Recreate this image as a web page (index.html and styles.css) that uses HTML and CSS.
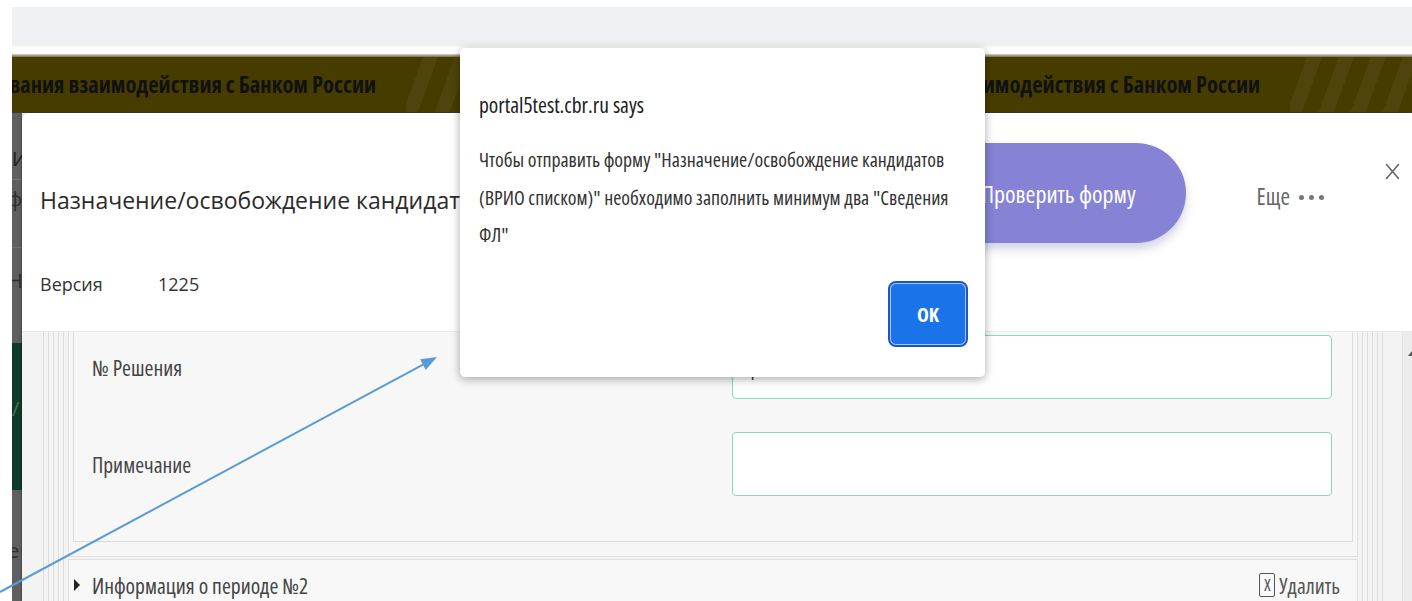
FILE: index.html
```html
<!DOCTYPE html>
<html lang="ru">
<head>
<meta charset="utf-8">
<title>Назначение/освобождение кандидатов</title>
<link rel="stylesheet" href="styles.css">
</head>
<body>
<div class="page">
  <div class="topbar"></div>
  <div class="topbar-fade"></div>

  <div class="banner">
    <div class="marquee">
      <div class="marquee-item">
        <span class="marquee-text">Портал для обеспечения и документирования взаимодействия с Банком России</span>
        <span class="marquee-stripes"></span>
      </div>
      <div class="marquee-item">
        <span class="marquee-text">Портал для обеспечения и документирования взаимодействия с Банком России</span>
        <span class="marquee-stripes"></span>
      </div>
    </div>
  </div>

  <div class="workspace">
    <div class="backdrop-strip">
      <div class="strip-part strip-top">
        <span class="strip-char strip-char-first">И</span>
        <span class="strip-char">ф</span>
        <span class="strip-char strip-char-low">Н</span>
      </div>
      <div class="strip-part strip-green"><span class="strip-char strip-char-light">/</span></div>
      <div class="strip-part strip-bottom"><span class="strip-char">е</span></div>
    </div>

    <section class="modal">
      <header class="modal-head">
        <div class="title-row">
          <h1 class="modal-title">Назначение/освобождение кандидатов (ВРИО списком)</h1>
          <button class="btn-check" type="button">Проверить форму</button>
          <button class="btn-more" type="button">Еще <span class="dots"><i></i><i></i><i></i></span></button>
          <button class="btn-close" type="button" aria-label="Закрыть">
            <svg width="15" height="17" viewBox="0 0 15 17"><path d="M1.5 1.5 L13.5 15.5 M13.5 1.5 L1.5 15.5" stroke="#666" stroke-width="1.6" fill="none" stroke-linecap="round"/></svg>
          </button>
        </div>
        <div class="version-row">
          <span class="version-label">Версия</span>
          <span class="version-value">1225</span>
        </div>
      </header>

      <div class="modal-body">
        <div class="scroll-area">
          <div class="nest"><div class="nest"><div class="nest"><div class="nest"><div class="nest">
            <div class="period">
              <div class="fieldset">
                <div class="form-row">
                  <span class="field-label">№ Решения</span>
                  <input class="field-input field-input-filled" type="text" value="1">
                </div>
                <div class="form-row">
                  <span class="field-label">Примечание</span>
                  <input class="field-input" type="text" value="">
                </div>
              </div>
            </div>
            <div class="period period-collapsed">
              <div class="period-head">
                <span class="caret"></span>
                <span class="period-title">Информация о периоде №2</span>
                <button class="btn-remove" type="button"><span class="remove-box">X</span>Удалить</button>
              </div>
            </div>
          </div></div></div></div></div>
        </div>
        <div class="scrollbar"><span class="scroll-up"></span></div>
      </div>
    </section>
  </div>

  <div class="alert" role="alertdialog">
    <div class="alert-title">portal5test.cbr.ru says</div>
    <div class="alert-text">Чтобы отправить форму "Назначение/освобождение кандидатов (ВРИО списком)" необходимо заполнить минимум два "Сведения ФЛ"</div>
    <div class="alert-actions"><button class="alert-ok" type="button">OK</button></div>
  </div>

  <svg class="pointer" width="1412" height="601" viewBox="0 0 1412 601">
    <line x1="0" y1="592" x2="423" y2="364.6" stroke="#5b9bd5" stroke-width="2"/>
    <polygon points="437,357 425.7,369.9 420.1,359.3" fill="#5b9bd5"/>
  </svg>
</div>
</body>
</html>
```
FILE: styles.css
```css
* { box-sizing: border-box; }

html, body {
  margin: 0;
  padding: 0;
}

body {
  background: #fff;
  font-family: "Open Sans", "Noto Sans", "DejaVu Sans", sans-serif;
  color: #333;
}

.page {
  position: relative;
  width: 1412px;
  height: 601px;
  overflow: hidden;
  padding: 7px 0 0 12px;
  display: flex;
  flex-direction: column;
}

/* top application bar */
.topbar {
  flex: none;
  height: 38px;
  background: #eff0f2;
}

.topbar-fade {
  flex: none;
  height: 12px;
  background: linear-gradient(#f3f2ea 0, #fff 25%, #fff 70%, #aaa58f 85%, #7a7350 100%);
}

/* olive running banner */
.banner {
  flex: none;
  height: 56px;
  background: #473c00;
  border-bottom: 1px solid #3d3a30;
  overflow: hidden;
  display: flex;
}

.marquee {
  flex: none;
  display: flex;
  margin-left: -360px;
}

.marquee-item {
  flex: none;
  width: 884px;
  display: flex;
  align-items: center;
  justify-content: flex-end;
}

.marquee-text {
  white-space: nowrap;
  font-weight: 700;
  font-size: 22.5px;
  font-stretch: 75%;
  color: #111;
}

.marquee-stripes {
  flex: none;
  width: 130px;
  margin-left: 30px;
  align-self: stretch;
  background: repeating-linear-gradient(110deg, transparent 0 16px, rgba(255, 255, 255, 0.045) 16px 30px);
}

/* page area behind the modal */
.workspace {
  flex: 1;
  min-height: 0;
  display: flex;
}

.backdrop-strip {
  flex: none;
  width: 10px;
  overflow: hidden;
  display: flex;
  flex-direction: column;
  background: #5f5f5f;
}

.strip-part {
  display: flex;
  flex-direction: column;
  overflow: hidden;
}

.strip-top {
  height: 230px;
  padding-top: 35px;
  background: linear-gradient(#5f5f5f 0 66px, #767676 66px 67px, #5f5f5f 67px 134px, #737373 134px 135px, #5f5f5f 135px);
}

.strip-green {
  height: 147px;
  padding-top: 55px;
  background: #0e3a2a;
}

.strip-bottom {
  flex: 1;
  padding-top: 50px;
}

.strip-char {
  font-size: 20px;
  line-height: 22px;
  color: #2e2e2e;
  margin-left: -4px;
}

.strip-char-first { color: #1e1e1e; margin-left: 0; margin-bottom: 18px; }
.strip-char-low { margin-top: 60px; }
.strip-char-light { color: #4f6f62; margin-left: 0; }

/* modal window */
.modal {
  flex: 1;
  min-width: 0;
  display: flex;
  flex-direction: column;
  background: #fff;
  border-radius: 6px 0 0 0;
  box-shadow: -1px 0 2px rgba(0, 0, 0, 0.25);
  overflow: hidden;
}

.modal-head {
  flex: none;
  height: 219px;
  padding: 30px 12px 0 18px;
  border-bottom: 1px solid #ebebeb;
}

.title-row {
  display: flex;
  align-items: center;
  height: 100px;
}

.modal-title {
  flex: 1;
  min-width: 0;
  margin: 0;
  padding-top: 14px;
  font-size: 23px;
  font-weight: 400;
  color: #2b2b2b;
  white-space: nowrap;
  overflow: hidden;
}

.btn-check {
  flex: none;
  width: 254px;
  height: 100px;
  border: 0;
  border-radius: 50px;
  background: #8683d6;
  color: #fff;
  font-family: inherit;
  font-size: 24px;
  font-stretch: 75%;
  box-shadow: 0 6px 10px rgba(80, 80, 160, 0.25);
}

.btn-more {
  flex: none;
  display: flex;
  align-items: center;
  margin-left: 71px;
  padding: 6px 0 0;
  border: 0;
  background: none;
  font-family: inherit;
  font-size: 23px;
  font-stretch: 75%;
  color: #666;
}

.dots {
  display: flex;
  gap: 5px;
  margin-left: 9px;
  padding-top: 2px;
}

.dots i {
  width: 5px;
  height: 5px;
  border-radius: 50%;
  background: #777;
}

.btn-close {
  flex: none;
  align-self: flex-start;
  margin: 20px 0 0 61px;
  padding: 0;
  border: 0;
  background: none;
  line-height: 0;
}

.version-row {
  display: flex;
  margin-top: 29px;
  font-size: 18px;
  line-height: 24px;
  color: #333;
}

.version-label { width: 118px; }

/* modal body: nested form panels */
.modal-body {
  flex: 1;
  min-height: 0;
  display: flex;
  background: #f3f3f3;
}

.scroll-area {
  flex: 1;
  min-width: 0;
  overflow: hidden;
  padding: 0 19px 0 21px;
}

.nest {
  border-left: 1px solid #dcdcdc;
  border-right: 1px solid #dcdcdc;
  padding: 0 4px;
}

.period {
  border: 1px solid #e0e0e0;
  border-top: 0;
  padding: 0 4px 14px;
  background: #f6f6f6;
}

.fieldset {
  border: 1px solid #dcdcdc;
  border-top: 0;
  padding: 3px 20px 45px 18px;
  background: #f7f7f7;
}

.form-row {
  display: grid;
  grid-template-columns: 1fr 600px;
  align-items: center;
}

.form-row + .form-row { margin-top: 33px; }

.field-label {
  font-size: 21.5px;
  font-stretch: 75%;
  color: #444;
}

.field-input {
  height: 64px;
  width: 100%;
  border: 1.5px solid #86dcbc;
  border-radius: 4px;
  background: #fff;
  padding: 0 14px;
  font-family: inherit;
  font-size: 18px;
  color: #333;
}

.field-input-filled { padding-top: 12px; }

.period-collapsed {
  margin-top: 2px;
  border: 1px solid #e0e0e0;
  border-bottom: 0;
  padding: 0 17px 0 4px;
  background: #f8f8f8;
}

.period-head {
  height: 50px;
  display: flex;
  align-items: center;
}

.caret {
  width: 0;
  height: 0;
  border-top: 6px solid transparent;
  border-bottom: 6px solid transparent;
  border-left: 6px solid #222;
  margin-left: 1px;
}

.period-title {
  flex: 1;
  margin-left: 12px;
  font-size: 21.5px;
  font-stretch: 75%;
  color: #444;
}

.btn-remove {
  display: flex;
  align-items: center;
  padding: 0;
  border: 0;
  background: none;
  font-family: inherit;
  font-size: 21.5px;
  font-stretch: 75%;
  color: #555;
}

.remove-box {
  width: 16px;
  height: 24px;
  margin-right: 4px;
  border: 1px solid #555;
  border-radius: 2px;
  font-size: 17px;
  line-height: 22px;
  text-align: center;
}

.scrollbar {
  flex: none;
  width: 10px;
  background: #ececec;
  border-left: 1px solid #e2e2e2;
  padding: 19px 0 0 5px;
}

.scroll-up {
  display: block;
  width: 0;
  height: 0;
  border-left: 4px solid transparent;
  border-right: 4px solid transparent;
  border-bottom: 5px solid #555;
}

/* browser alert dialog */
.alert {
  position: absolute;
  left: 460px;
  top: 48px;
  width: 525px;
  height: 329px;
  padding: 43px 15px 0 19px;
  background: #fff;
  border-radius: 5px;
  box-shadow: 0 2px 10px rgba(0, 0, 0, 0.35);
  display: flex;
  flex-direction: column;
}

.alert-title {
  font-size: 21.5px;
  font-stretch: 75%;
  line-height: 28px;
  color: #222;
}

.alert-text {
  margin-top: 22px;
  font-size: 19.8px;
  font-stretch: 75%;
  line-height: 37.5px;
  color: #333;
}

.alert-actions {
  margin-top: auto;
  padding-bottom: 32px;
  padding-right: 4px;
  display: flex;
  justify-content: flex-end;
}

.alert-ok {
  width: 76px;
  height: 62px;
  border: 1px solid #a8c7fa;
  border-radius: 6px;
  outline: 2px solid #1b56c2;
  background: #1a73e8;
  color: #fff;
  font-family: inherit;
  font-size: 20px;
  font-weight: 700;
  font-stretch: 75%;
}

.pointer {
  position: absolute;
  left: 0;
  top: 0;
  pointer-events: none;
}
```
